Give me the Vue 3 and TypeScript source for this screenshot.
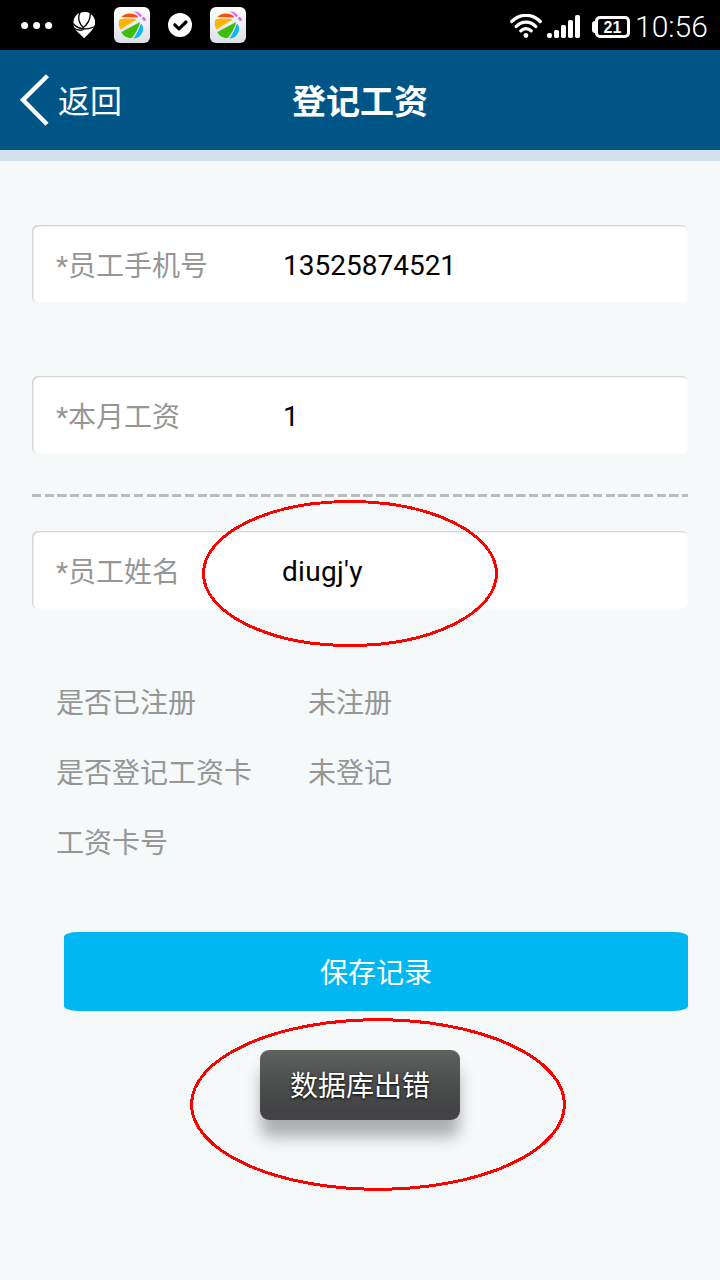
<script setup lang="ts">
interface Field {
  label: string
  value: string
}

const topFields: Field[] = [
  { label: '*员工手机号', value: '13525874521' },
  { label: '*本月工资', value: '1' },
]
const nameField: Field = { label: '*员工姓名', value: "diugj'y" }
const facts: Field[] = [
  { label: '是否已注册', value: '未注册' },
  { label: '是否登记工资卡', value: '未登记' },
  { label: '工资卡号', value: '' },
]
</script>

<template>
  <div class="screen">
    <div class="status">
      <svg class="dots" width="32" height="8" viewBox="0 0 32 8" fill="#fff">
        <circle cx="3.6" cy="4.400" r="3.5" /><circle cx="15.6" cy="4.400" r="3.5" /><circle cx="27.6" cy="4.400" r="3.5" />
      </svg>
      <svg class="rose" width="24" height="28" viewBox="0 0 24 28">
        <path d="M5.500 3C9 .5 15 .3 18 2.200C22 5 24 9.500 22.800 14C21.500 19 15 24 12.300 27.300C9.500 24 3 20 1.800 15.500C.8 10 2 6 5.500 3Z" fill="#fff" />
        <path d="M8.300 1C5.500 6 6.500 12.500 11.500 16.500M18.200 1C18.800 8 16.500 13 10.500 17M1 12.500C4 16.500 9 17.800 13.500 17.800C17.500 17.800 21 17 24 14.500M1 16.500C5 19.500 9 20 12.500 18" fill="none" stroke="#000" stroke-width="1.300" />
      </svg>
      <svg class="ball" width="36" height="36" viewBox="0 0 36 36">
        <defs>
          <linearGradient id="tile" x2="0" y2="1"><stop stop-color="#fff" /><stop offset="1" stop-color="#dcdfe5" /></linearGradient>
          <g id="beach-ball">
            <rect width="36" height="36" rx="6" fill="url(#tile)" />
            <path d="M7.500 10C11 6 17 5 23.500 8.800L24 10.500Z" fill="#ff4a10" />
            <path d="M5.500 12.500C10 11.300 17 11.300 23 12.300L6.500 22.500C4.500 19.500 4.300 15 5.500 12.500Z" fill="#ffb300" />
            <path d="M7.500 25L26 15C25 20 21 28 17.500 31C13 31.500 8.500 28.500 7.500 25Z" fill="#40bd08" />
            <path d="M27 16.500C29.500 19 30 23 27.500 27C25.500 30 22.500 31.500 19.500 31.500C23 26.500 25.500 21 27 16.500Z" fill="#10b8fa" />
            <path d="M19.500 4.500C23 4 26.500 6 28 9L26 10C24.500 7.500 22.500 5.800 19.500 4.500Z" fill="#ee50f5" />
            <ellipse cx="30" cy="12" rx="2.300" ry="1.500" transform="rotate(50 30 12)" fill="#d86af2" />
          </g>
        </defs>
        <use href="#beach-ball" />
      </svg>
      <svg class="tick" width="24" height="24" viewBox="0 0 24 24">
        <circle cx="12" cy="12" r="12" fill="#fff" />
        <path d="M6.800 11.800L11 15.800L18 9" fill="none" stroke="#000" stroke-width="3.200" stroke-linecap="round" stroke-linejoin="round" />
      </svg>
      <svg class="ball" width="36" height="36" viewBox="0 0 36 36">
        <use href="#beach-ball" />
      </svg>
      <span class="spacer"></span>
      <svg class="wifi" width="32" height="25" viewBox="0 0 32 25">
        <g fill="none" stroke="#fff" stroke-width="3.300" stroke-linecap="round">
          <path d="M1.800 7.500C9.500-.7 22.500-.7 30.200 7.500" />
          <path d="M6.200 12.500C11.600 6.700 20.400 6.700 25.800 12.500" />
          <path d="M10.800 16.800C13.700 13.800 18.300 13.800 21.200 16.800" />
        </g>
        <circle cx="15.900" cy="21.500" r="2.400" fill="#fff" />
      </svg>
      <svg class="signal" width="34" height="24" viewBox="0 0 34 24" fill="#fff">
        <rect x="0" y="18" width="5" height="5" rx="2" />
        <rect x="7" y="15" width="5" height="8" rx="1.800" />
        <rect x="14" y="10" width="5" height="13" rx="1.800" />
        <rect x="21" y="5" width="5" height="18" rx="1.800" />
        <rect x="28" y="0" width="5" height="23" rx="1.800" />
      </svg>
      <div class="battery"><span>21</span></div>
      <span class="time">10:56</span>
    </div>

    <header class="bar">
      <div class="back">
        <svg width="30" height="52" viewBox="0 0 30 52">
          <path d="M27.500 1.800L3 26L27 50.200" fill="none" stroke="#fff" stroke-width="4.400" />
        </svg>
        <span>返回</span>
      </div>
      <h1>登记工资</h1>
    </header>
    <div class="strip"></div>

    <main>
      <div v-for="f in topFields" :key="f.label" class="field">
        <span class="label">{{ f.label }}</span><span class="value">{{ f.value }}</span>
      </div>
      <div class="dashes"></div>
      <div class="field named">
        <span class="label">{{ nameField.label }}</span><span class="value">{{ nameField.value }}</span>
      </div>
      <dl class="facts">
        <div v-for="f in facts" :key="f.label" class="fact">
          <dt>{{ f.label }}</dt>
          <dd>{{ f.value }}</dd>
        </div>
      </dl>
      <button class="save" type="button">保存记录</button>
    </main>

    <div class="toast">数据库出错</div>
    <svg class="marks" width="720" height="1280" viewBox="0 0 720 1280" fill="none" stroke="#f00" stroke-width="3" shape-rendering="crispEdges">
      <ellipse cx="350" cy="573.500" rx="146.500" ry="72" />
      <ellipse cx="378" cy="1104.500" rx="186.500" ry="84.800" />
    </svg>
  </div>
</template>

<style>
html,
body {
  margin: 0;
  background: #f5f9fa;
}
</style>

<style scoped>
.screen {
  position: relative;
  width: 720px;
  height: 1280px;
  overflow: hidden;
  background: #f5f9fa;
  font-family: Roboto, "Noto Sans CJK SC", sans-serif;
  font-size: 28px;
}
.status {
  display: flex;
  align-items: flex-start;
  height: 50px;
  background: #000;
  color: #fff;
}
.status svg {
  flex: none;
}
.dots {
  margin: 21px 0 0 21px;
}
.rose {
  margin: 11px 0 0 19px;
}
.ball {
  margin: 7px 0 0 18px;
}
.tick {
  margin: 13px 0 0 18px;
}
.spacer {
  flex: 1;
}
.wifi {
  margin-top: 14px;
}
.signal {
  margin: 15px 0 0 5px;
}
.battery {
  position: relative;
  box-sizing: border-box;
  width: 35px;
  height: 22px;
  margin: 16px 0 0 14px;
  border: 3px solid #fff;
  border-radius: 5px;
  font: bold 16px/17px "Liberation Sans", sans-serif;
  text-align: center;
}
.battery::before {
  content: "";
  position: absolute;
  left: -6px;
  top: 2px;
  width: 4px;
  height: 12px;
  border-radius: 3px 0 0 3px;
  background: #fff;
}
.time {
  width: 90px;
  margin-top: 9px;
  padding-left: 5px;
  box-sizing: border-box;
  font-size: 30px;
  line-height: 36px;
  font-weight: 300;
}
.bar {
  display: grid;
  grid-template-columns: 1fr auto 1fr;
  align-items: center;
  height: 100px;
  background: #005587;
  color: #fff;
}
.back {
  display: flex;
  align-items: center;
  padding-left: 20px;
  font-size: 32px;
  line-height: 40px;
}
.back span {
  margin-left: 8px;
  padding-top: 3px;
}
h1 {
  margin: 0;
  padding-top: 3px;
  font-size: 34px;
  line-height: 40px;
  font-weight: 700;
}
.strip {
  height: 11px;
  background: #d2e2ec;
}
main {
  padding: 64px 32px 0;
}
.field {
  display: flex;
  box-sizing: border-box;
  height: 78px;
  margin-bottom: 73px;
  padding-left: 24px;
  border-radius: 6px;
  background: #fff;
  box-shadow: inset 1px 1px 2px rgba(0, 0, 0, 0.22);
  line-height: 82px;
}
.label {
  width: 227px;
  color: #969696;
  line-height: 83px;
}
.value {
  color: #000;
}
.dashes {
  height: 3px;
  margin: -33px 0 34px;
  background: repeating-linear-gradient(90deg, #b9bcbd 0 8.800px, transparent 9.300px 12.750px);
}
.named {
  margin-bottom: 60px;
}
.named .value {
  margin-left: -1px;
  letter-spacing: 0.3px;
}
.facts {
  margin: 0;
  padding-left: 24px;
  color: #969696;
}
.fact {
  display: flex;
  height: 70px;
  line-height: 70px;
}
dt {
  width: 252px;
}
dd {
  margin: 0;
}
.save {
  display: block;
  width: 624px;
  height: 79px;
  margin: 53px 0 0 32px;
  padding: 0;
  border: 0;
  border-radius: 14px / 5px;
  background: #00b7f1;
  color: #fff;
  font: inherit;
  line-height: 84px;
}
.toast {
  position: absolute;
  left: 260px;
  top: 1050px;
  width: 200px;
  height: 70px;
  border-radius: 9px;
  background: linear-gradient(#606260, #505351 35%, #434345 85%);
  box-shadow: 0 18px 16px -1px rgba(0, 0, 0, 0.3);
  color: #fff;
  line-height: 73px;
  text-align: center;
  text-shadow: 0 1px 3px #000;
}
.marks {
  position: absolute;
  inset: 0;
}
</style>
